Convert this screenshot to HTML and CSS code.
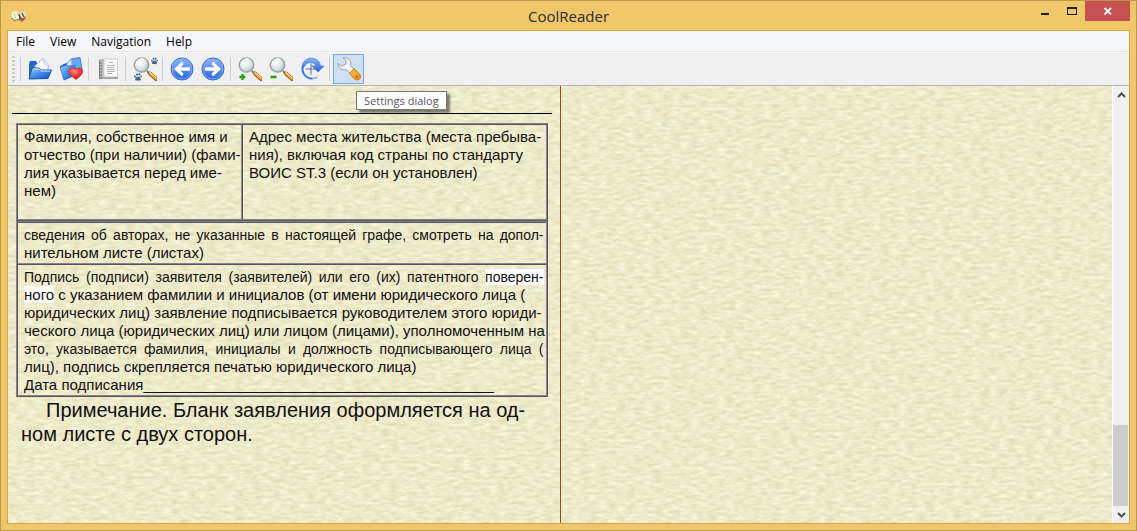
FILE: index.html
```html
<!DOCTYPE html>
<html lang="en">
<head>
<meta charset="utf-8">
<title>CoolReader</title>
<link rel="stylesheet" href="styles.css">
</head>
<body>
<svg class="defs" aria-hidden="true">
  <defs>
    <linearGradient id="blue" x1="0" y1="0" x2="0" y2="1"><stop offset="0" stop-color="#8cb6fb"/><stop offset="1" stop-color="#2264e8"/></linearGradient>
    <linearGradient id="folder" x1="0" y1="0" x2="1" y2="1"><stop offset="0" stop-color="#9fd0fb"/><stop offset=".5" stop-color="#3f8cec"/><stop offset="1" stop-color="#0d4fc0"/></linearGradient>
    <linearGradient id="orange" x1="0" y1="0" x2="1" y2="1"><stop offset="0" stop-color="#ffcb45"/><stop offset="1" stop-color="#ee8a08"/></linearGradient>
    <radialGradient id="glass" cx=".4" cy=".35" r=".65"><stop offset="0" stop-color="#fff"/><stop offset=".6" stop-color="#dfe6e6"/><stop offset="1" stop-color="#b5c0c2"/></radialGradient>
    <radialGradient id="red" cx=".4" cy=".3" r=".8"><stop offset="0" stop-color="#ff8d80"/><stop offset=".5" stop-color="#f23a36"/><stop offset="1" stop-color="#c81418"/></radialGradient>
    <symbol id="lens" viewBox="0 0 24 24">
      <path d="M14 14l3 3" stroke="#777" stroke-width="2"/>
      <path d="M17 16.500l6 5.500" stroke="#a45b16" stroke-width="4" stroke-linecap="round"/>
      <path d="M17.200 16.200l5.600 5.200" stroke="#f4b03e" stroke-width="2.600" stroke-linecap="round"/>
      <path d="M17.500 15.700l5 4.600" stroke="#ffe2a0" stroke-width=".9"/>
      <circle cx="8.500" cy="8" r="7.200" fill="url(#glass)" stroke="#969d9e" stroke-width="1.300"/>
      <path d="M3.500 7a5.500 5.500 0 0 1 8-4.300" fill="none" stroke="#fff" stroke-width="1.400"/>
    </symbol>
    <symbol id="paw" viewBox="0 0 8 8">
      <g fill="#48647f"><path d="M4 3.500c2 0 3 1.600 2.800 3S5.300 7.600 4 7.500 1 8 1.200 6.300 2.500 3.500 4 3.500z"/><circle cx="1" cy="3.600" r="1"/><circle cx="3" cy="1.500" r="1.100"/><circle cx="5.400" cy="1.400" r="1.100"/><circle cx="7.200" cy="3.400" r=".9"/></g>
    </symbol>
  </defs>
</svg>
<div class="window">
  <header class="titlebar">
    <svg class="app-icon" viewBox="0 0 16 12"><path d="M0 8l3 3 5-1 3 2 1-2 3-2V5" fill="#8d7448"/><path d="M1 2l5-1 3 3-1 5-5 1-3-4z" fill="#f8f1dc"/><path d="M9 3l5-2 1.500 5-5 3z" fill="#e9e0ca"/><path d="M3 3l1.500 5M6 2l2 4" fill="none" stroke="#b5a98d" stroke-width=".7"/><path d="M8 4l1 4 3 1M11 3l2 4" fill="none" stroke="#5b4637" stroke-width="1.300"/><path d="M10 9l4 0-2 2z" fill="#c74b20"/></svg>
    <h1 class="title">CoolReader</h1>
    <div class="controls">
      <button class="ctl" aria-label="Minimize"><svg viewBox="0 0 12 10"><path d="M2 7h8v2H2z" fill="#1e1e1e"/></svg></button>
      <button class="ctl" aria-label="Maximize"><svg viewBox="0 0 12 10"><path d="M1 1h10v8H1zM2 3v5h8V3z" fill="#1e1e1e" fill-rule="evenodd"/></svg></button>
      <button class="ctl ctl-close" aria-label="Close"><svg viewBox="0 0 12 10"><path d="M2.500 2l6.500 6.500M9 2L2.500 8.500" stroke="#fff" stroke-width="1.800"/></svg></button>
    </div>
  </header>
  <div class="client">
    <nav class="menubar">
      <button>File</button><button>View</button><button>Navigation</button><button>Help</button>
    </nav>
    <div class="toolbar" role="toolbar">
      <span class="grip"></span><span class="sep"></span>
      <button class="tool" aria-label="Open file"><svg viewBox="0 0 24 24"><path d="M1 7l1-3h6l1 2h10v5L5 22H1z" fill="#2369d4"/><path d="M7 9l8-8 6 8-3 8H7z" fill="#f7f9ff" stroke="#aebfe4"/><path d="M15 1l1 6 5 2" fill="#dfe6f6" stroke="#aebfe4" stroke-width=".6"/><path d="M4 11h7l2 2h10.500L20 21.500 1 22z" fill="url(#folder)" stroke="#1b4fa8"/><path d="M5 12h6l2 2h9" fill="none" stroke="#d7ecff"/></svg></button>
      <button class="tool" aria-label="Recent books"><svg viewBox="0 0 24 24"><path d="M1 9l6-3 2 2 7-3 4 10-13 7z" fill="#2469d2"/><path d="M7 8l5-6 9-1.500 2 12-9 6z" fill="#65aaf5" stroke="#2f6bcb" stroke-width=".8"/><path d="M12 2l1 6-6 1" fill="#eaf4ff" stroke="#6e9bdc" stroke-width=".6"/><path d="M1 10l7-2 2 2 6-2 1 10-12 5z" fill="url(#folder)" stroke="#2463c2" stroke-width=".7"/><path d="M17 22.500C11 18.500 9.500 16 9.700 13.800c.5-3.800 5.300-4.200 7.100-1.100 1.900-3 6.600-2.300 6.900 1.300.2 3-3 5.900-6.700 8.500z" fill="url(#red)" stroke="#bd2525" stroke-width=".6"/></svg></button>
      <span class="sep"></span>
      <button class="tool" aria-label="Table of contents"><svg viewBox="0 0 24 24"><path d="M3 3h4v19H3z" fill="#8c8c8c"/><path d="M4 2h4v18H4z" fill="#b9b9b9"/><path d="M3 6h3M3 9h3M3 12h3M3 15h3M3 18h3" stroke="#555" stroke-width=".8"/><path d="M8 2h13.500v18H8z" fill="#fafafa" stroke="#cfcfcf"/><path d="M5 22h16.500l1-2H7" fill="#a9a9a9"/><path d="M13 5.500h4M11 8.500h8M11 10.500h7M11 12.500h8M11 14.500h8M11 16.500h5" stroke="#a2a2a2" stroke-width=".8"/></svg></button>
      <span class="sep"></span>
      <button class="tool" aria-label="Find text"><svg viewBox="0 0 24 24"><use href="#lens" width="24" height="24"/><use href="#paw" x="18" y="0" width="7" height="8"/><use href="#paw" x="1" y="16" width="8" height="8"/></svg></button>
      <span class="sep"></span>
      <button class="tool" aria-label="Back"><svg viewBox="0 0 24 24"><circle cx="12" cy="12" r="11" fill="url(#blue)" stroke="#3268ce"/><circle cx="12" cy="12" r="9.900" fill="none" stroke="#8db5fa" stroke-width=".8"/><path d="M4 12l8-7.500 1.500 2.800-3 3H20v3.400h-9.500l3 3-1.500 2.800z" fill="#fff"/></svg></button>
      <button class="tool" aria-label="Forward"><svg viewBox="0 0 24 24"><circle cx="12" cy="12" r="11" fill="url(#blue)" stroke="#3268ce"/><circle cx="12" cy="12" r="9.900" fill="none" stroke="#8db5fa" stroke-width=".8"/><path d="M20 12l-8-7.500-1.500 2.800 3 3H4v3.400h9.500l-3 3 1.500 2.800z" fill="#fff"/></svg></button>
      <span class="sep"></span>
      <button class="tool" aria-label="Zoom in"><svg viewBox="0 0 24 24"><use href="#lens" width="24" height="24"/><path d="M4.500 17v6M1.500 20h6" stroke="#22a80e" stroke-width="2.400"/></svg></button>
      <button class="tool" aria-label="Zoom out"><svg viewBox="0 0 24 24"><use href="#lens" width="24" height="24"/><path d="M1.500 20h6" stroke="#22a80e" stroke-width="2.600"/></svg></button>
      <button class="tool" aria-label="Rotate"><svg viewBox="0 0 24 24"><path d="M12.500 21.500A9.500 9.500 0 0 1 3 9" fill="none" stroke="#3b76e6" stroke-width="2"/><path d="M12.500 21.500c2 0 3.500-.5 5-1.500" fill="none" stroke="#7aa6f2" stroke-width="1.500"/><path d="M2 10C3 3 9 0 14 1.500c4 1 6 4 6.500 7.500H24l-6 6-6-6h4C14.500 4.500 7 3.500 4 10z" fill="url(#blue)" stroke="#3d78da" stroke-width=".7"/><path d="M11 6.500v11M5.500 12h11" stroke="#55708e" stroke-width="1"/></svg></button>
      <span class="sep"></span>
      <button class="tool tool-active" aria-label="Settings dialog"><svg viewBox="0 0 24 24"><path d="M6 .8C9.500 0 13 2 13.800 5.500l-.2 3.200 4 4-4.200 4-4-4C5 13.700 1 11 .6 6.500L5 9l4-2.200.1-3z" fill="#eff0f5" stroke="#9b9ead"/><path d="M9.500 10.500l3-3" stroke="#fff" stroke-width="1.500"/><path d="M12.500 16.300l4.800-4.600 6 6.500c1.200 3-1.500 5.500-4.800 4.600z" fill="url(#orange)" stroke="#c9780a"/><circle cx="19.800" cy="19.600" r="1" fill="#a65b05"/></svg></button>
    </div>
    <main class="reader">
      <svg class="paper" aria-hidden="true"><filter id="grain" x="0" y="0" width="100%" height="100%" color-interpolation-filters="sRGB"><feTurbulence type="fractalNoise" baseFrequency=".11 .32" numOctaves="2" seed="4"/><feColorMatrix values=".15 0 0 0 .855  .15 0 0 0 .845  .2 0 0 0 .69  0 0 0 0 1"/></filter><rect width="100%" height="100%" filter="url(#grain)"/></svg>
      <article class="page">
        <hr class="rule">
        <table class="form form-top">
          <tr>
            <td class="name-cell">Фамилия, собственное имя и<br>отчество (при наличии) (фами-<br>лия указывается перед име-<br>нем)</td>
            <td>Адрес места жительства (места пребыва-<br>ния), включая код страны по стандарту<br>ВОИС ST.3 (если он установлен)</td>
          </tr>
        </table>
        <table class="form">
          <tr><td><span class="full">сведения об авторах, не указанные в настоящей графе, смотреть на допол-</span>нительном листе (листах)</td></tr>
          <tr><td><span class="full">Подпись (подписи) заявителя (заявителей) или его (их) патентного <mark>поверен-</mark></span><mark>ного</mark> с указанием фамилии и инициалов (от имени юридического лица (<br>юридических лиц) заявление подписывается руководителем этого юриди-<br>ческого лица (юридических лиц) или лицом (лицами), уполномоченным на<br><span class="full">это, указывается фамилия, инициалы и должность подписывающего лица (</span>лиц), подпись скрепляется печатью юридического лица)<br>Дата подписания__________________________________________</td></tr>
        </table>
        <p class="note">Примечание. Бланк заявления оформляется на од-<br>ном листе с двух сторон.</p>
      </article>
      <section class="page page-right"></section>
      <div class="scrollbar">
        <button aria-label="Scroll up"><svg viewBox="0 0 9 6"><path d="M1 5l3.500-3.500L8 5" fill="none" stroke="#505050" stroke-width="2"/></svg></button>
        <div class="track"><div class="thumb"></div></div>
        <button aria-label="Scroll down"><svg viewBox="0 0 9 6"><path d="M1 1l3.500 3.500L8 1" fill="none" stroke="#505050" stroke-width="2"/></svg></button>
      </div>
      <div class="tooltip" role="tooltip">Settings dialog</div>
    </main>
  </div>
</div>
</body>
</html>
```
FILE: styles.css
```css
* { box-sizing: border-box; }
body { margin: 0; font-family: "Open Sans", "Noto Sans", sans-serif; }
button { margin: 0; padding: 0; border: 0; background: none; font: inherit; color: inherit; }
svg { display: block; }
.defs { position: absolute; width: 0; height: 0; }

.window { display: flex; flex-direction: column; height: 100vh; padding: 0 6px 6px; background: #f0c869; border: 1px solid #b9974d; }
.titlebar { display: grid; grid-template-columns: 1fr auto 1fr; align-items: center; height: 29px; flex: none; }
.app-icon { width: 16px; height: 12px; margin-left: 4px; }
.title { margin: 0; font-size: 15px; line-height: 28px; font-weight: 400; color: #2b2b2b; }
.controls { display: flex; justify-content: flex-end; align-self: start; }
.ctl { display: flex; justify-content: center; align-items: center; width: 27px; height: 20px; }
.ctl svg { width: 12px; height: 10px; }
.ctl-close { width: 45px; background: #c75050; }

.client { display: flex; flex-direction: column; flex: 1; min-height: 0; border: 1px solid #cfa94f; background: #f0f0f0; }
.menubar { display: flex; gap: 15px; height: 22px; flex: none; padding: 0 8px; background: #f5f6f8; border-bottom: 1px solid #fff; box-shadow: inset 0 -1px #e3e5e8; font-size: 12px; line-height: 21px; color: #000; }
.toolbar { display: flex; align-items: center; height: 33px; flex: none; padding-left: 4px; border-bottom: 1px solid #b4b4b4; }
.grip { width: 3px; height: 26px; margin-right: 3px; background: repeating-linear-gradient(#cacaca 0 2px, #f0f0f0 2px 4px); }
.sep { width: 6px; height: 24px; background: linear-gradient(#cfcfcf, #cfcfcf) 2px 0 / 1px 100% no-repeat; }
.tool { display: flex; align-items: center; justify-content: center; width: 31px; height: 30px; border: 1px solid transparent; }
.tool svg { width: 24px; height: 24px; overflow: visible; }
.tool-active { background: #cfe0f1; border-color: #7aa9df; }

.reader { position: relative; display: flex; flex: 1; min-height: 0; background: #edeac8; }
.paper { position: absolute; inset: 0; width: 100%; height: 100%; }
.page { position: relative; flex: 1; min-width: 0; padding: 27px 8px 0 4px; overflow: hidden; border-right: 1px solid #a2441c; font-family: "Liberation Sans", Arial, sans-serif; color: #111; }
.page-right { border-right: 0; }
.rule { height: 1px; margin: 0 0 9px; border: 0; background: #000; }
.form { width: calc(100% - 8px); margin: 0 4px; table-layout: fixed; border-collapse: separate; border-spacing: 0; border: 1px solid #85858a; border-bottom-color: #55555f; border-right-color: #55555f; font-size: 15px; line-height: 18px; }
.form td { padding: 3px 2px 1px 6px; border: 1px solid #55555f; border-bottom-color: #85858a; border-right-color: #85858a; vertical-align: top; white-space: nowrap; }
.form-top td { height: 96px; }
.form .name-cell { width: 225px; }
.full { display: block; font-size: 14px; line-height: 18px; text-align: justify; text-align-last: justify; white-space: normal; }
mark { background: #fff; color: inherit; }
.note { margin: 1px 0 0; padding-left: 9px; font-size: 20px; line-height: 24px; text-indent: 25px; white-space: nowrap; }

.scrollbar { position: relative; display: flex; flex-direction: column; width: 17px; flex: none; background: #f0f0f0; border-left: 1px solid #fff; }
.scrollbar button { display: flex; align-items: center; justify-content: center; height: 17px; }
.scrollbar svg { width: 9px; height: 6px; }
.track { display: flex; flex-direction: column; justify-content: flex-end; flex: 1; }
.thumb { height: 20%; margin-right: 1px; background: #cdcdcd; }
.tooltip { position: absolute; left: 348px; top: 5px; padding: 0 7px; background: #fff; border: 1px solid #767676; box-shadow: 3px 3px 2px #0007; font-size: 11px; line-height: 17px; color: #575757; }
```
